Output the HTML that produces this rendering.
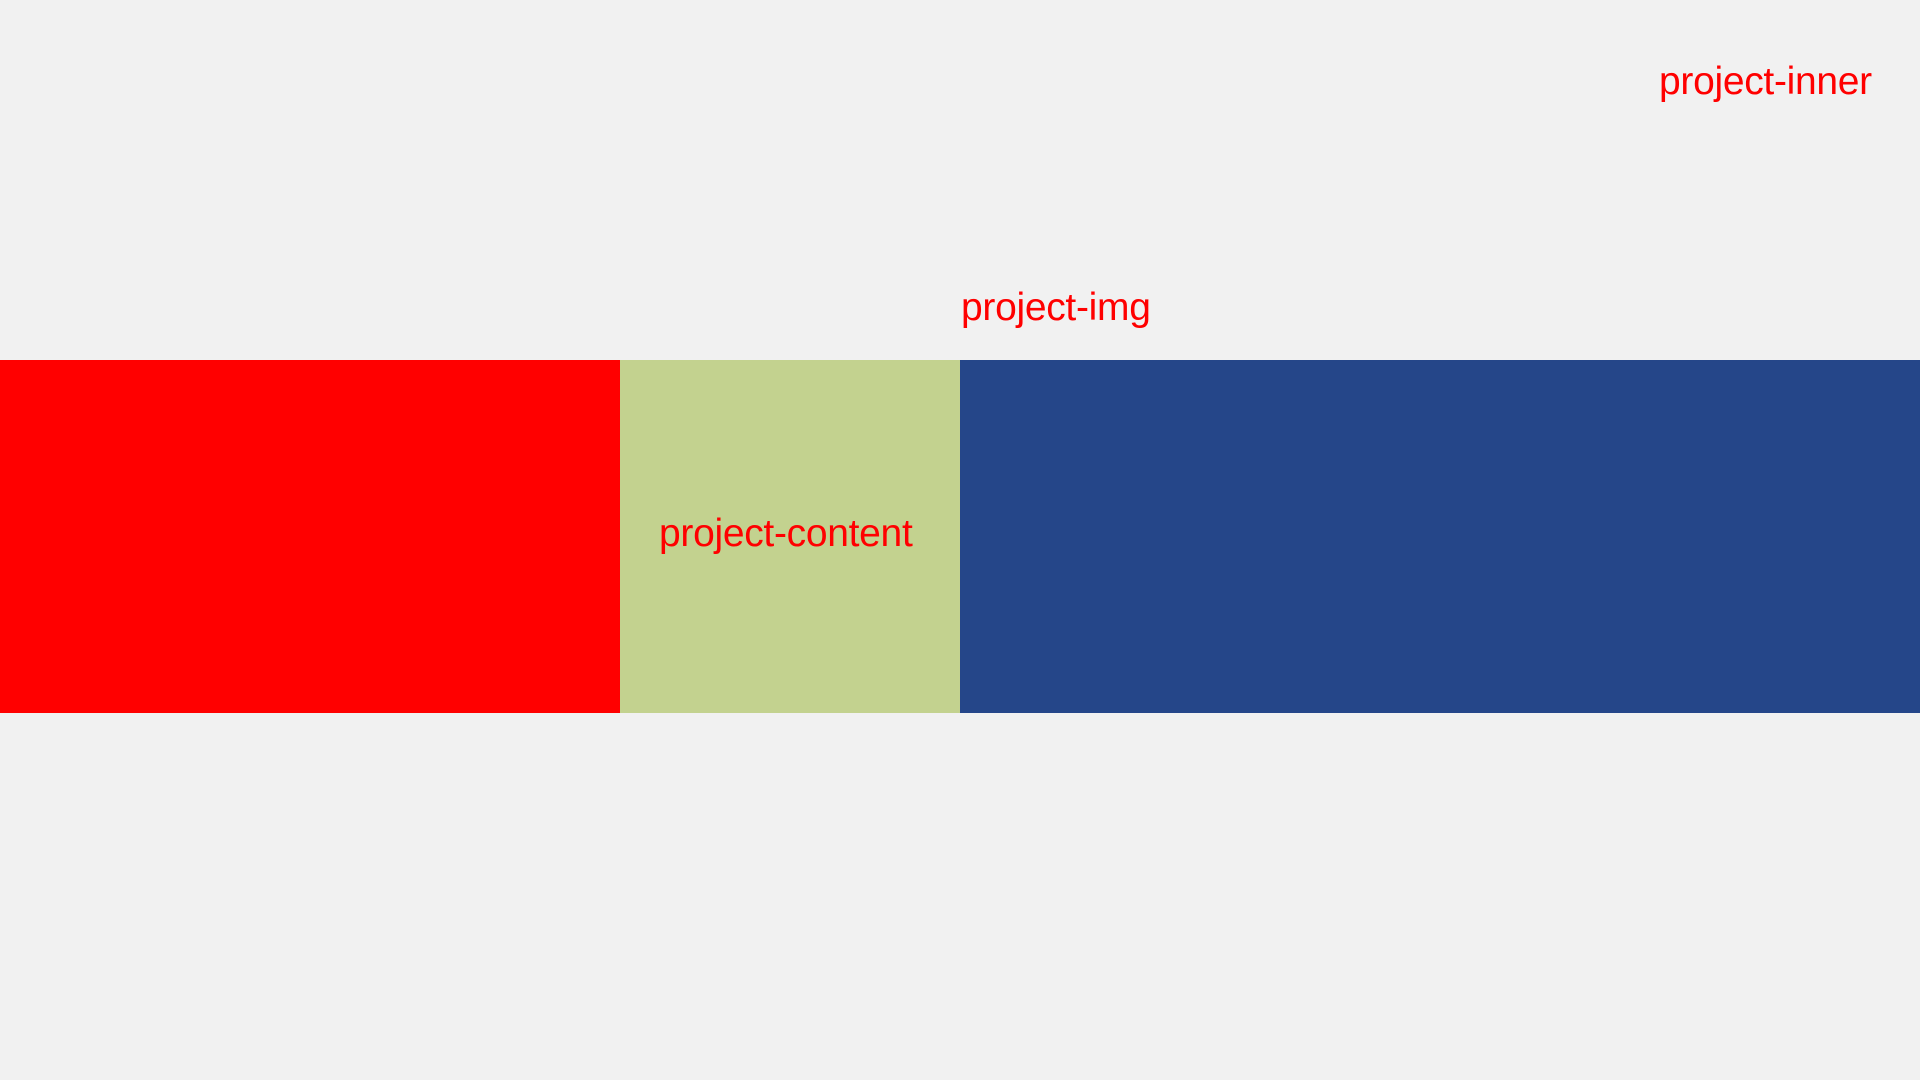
<!DOCTYPE html>
<html><head><meta charset="utf-8"><style>
html,body{margin:0;padding:0;width:1920px;height:1080px;background:#f1f1f1;overflow:hidden;position:relative;font-family:"Liberation Sans",sans-serif;}
.b{position:absolute;top:360px;height:353px;}
.t{position:absolute;color:#ff0000;font-size:39px;letter-spacing:-0.3px;white-space:nowrap;line-height:1;}
</style></head><body>
<div class="b" style="left:0;width:620px;background:#ff0000"></div>
<div class="b" style="left:620px;width:340px;background:#c3d28f"></div>
<div class="b" style="left:960px;width:960px;background:#254689"></div>
<div class="t" style="left:1659px;top:62px">project-inner</div>
<div class="t" style="left:961px;top:288px">project-img</div>
<div class="t" style="left:659px;top:514px">project-content</div>
</body></html>
